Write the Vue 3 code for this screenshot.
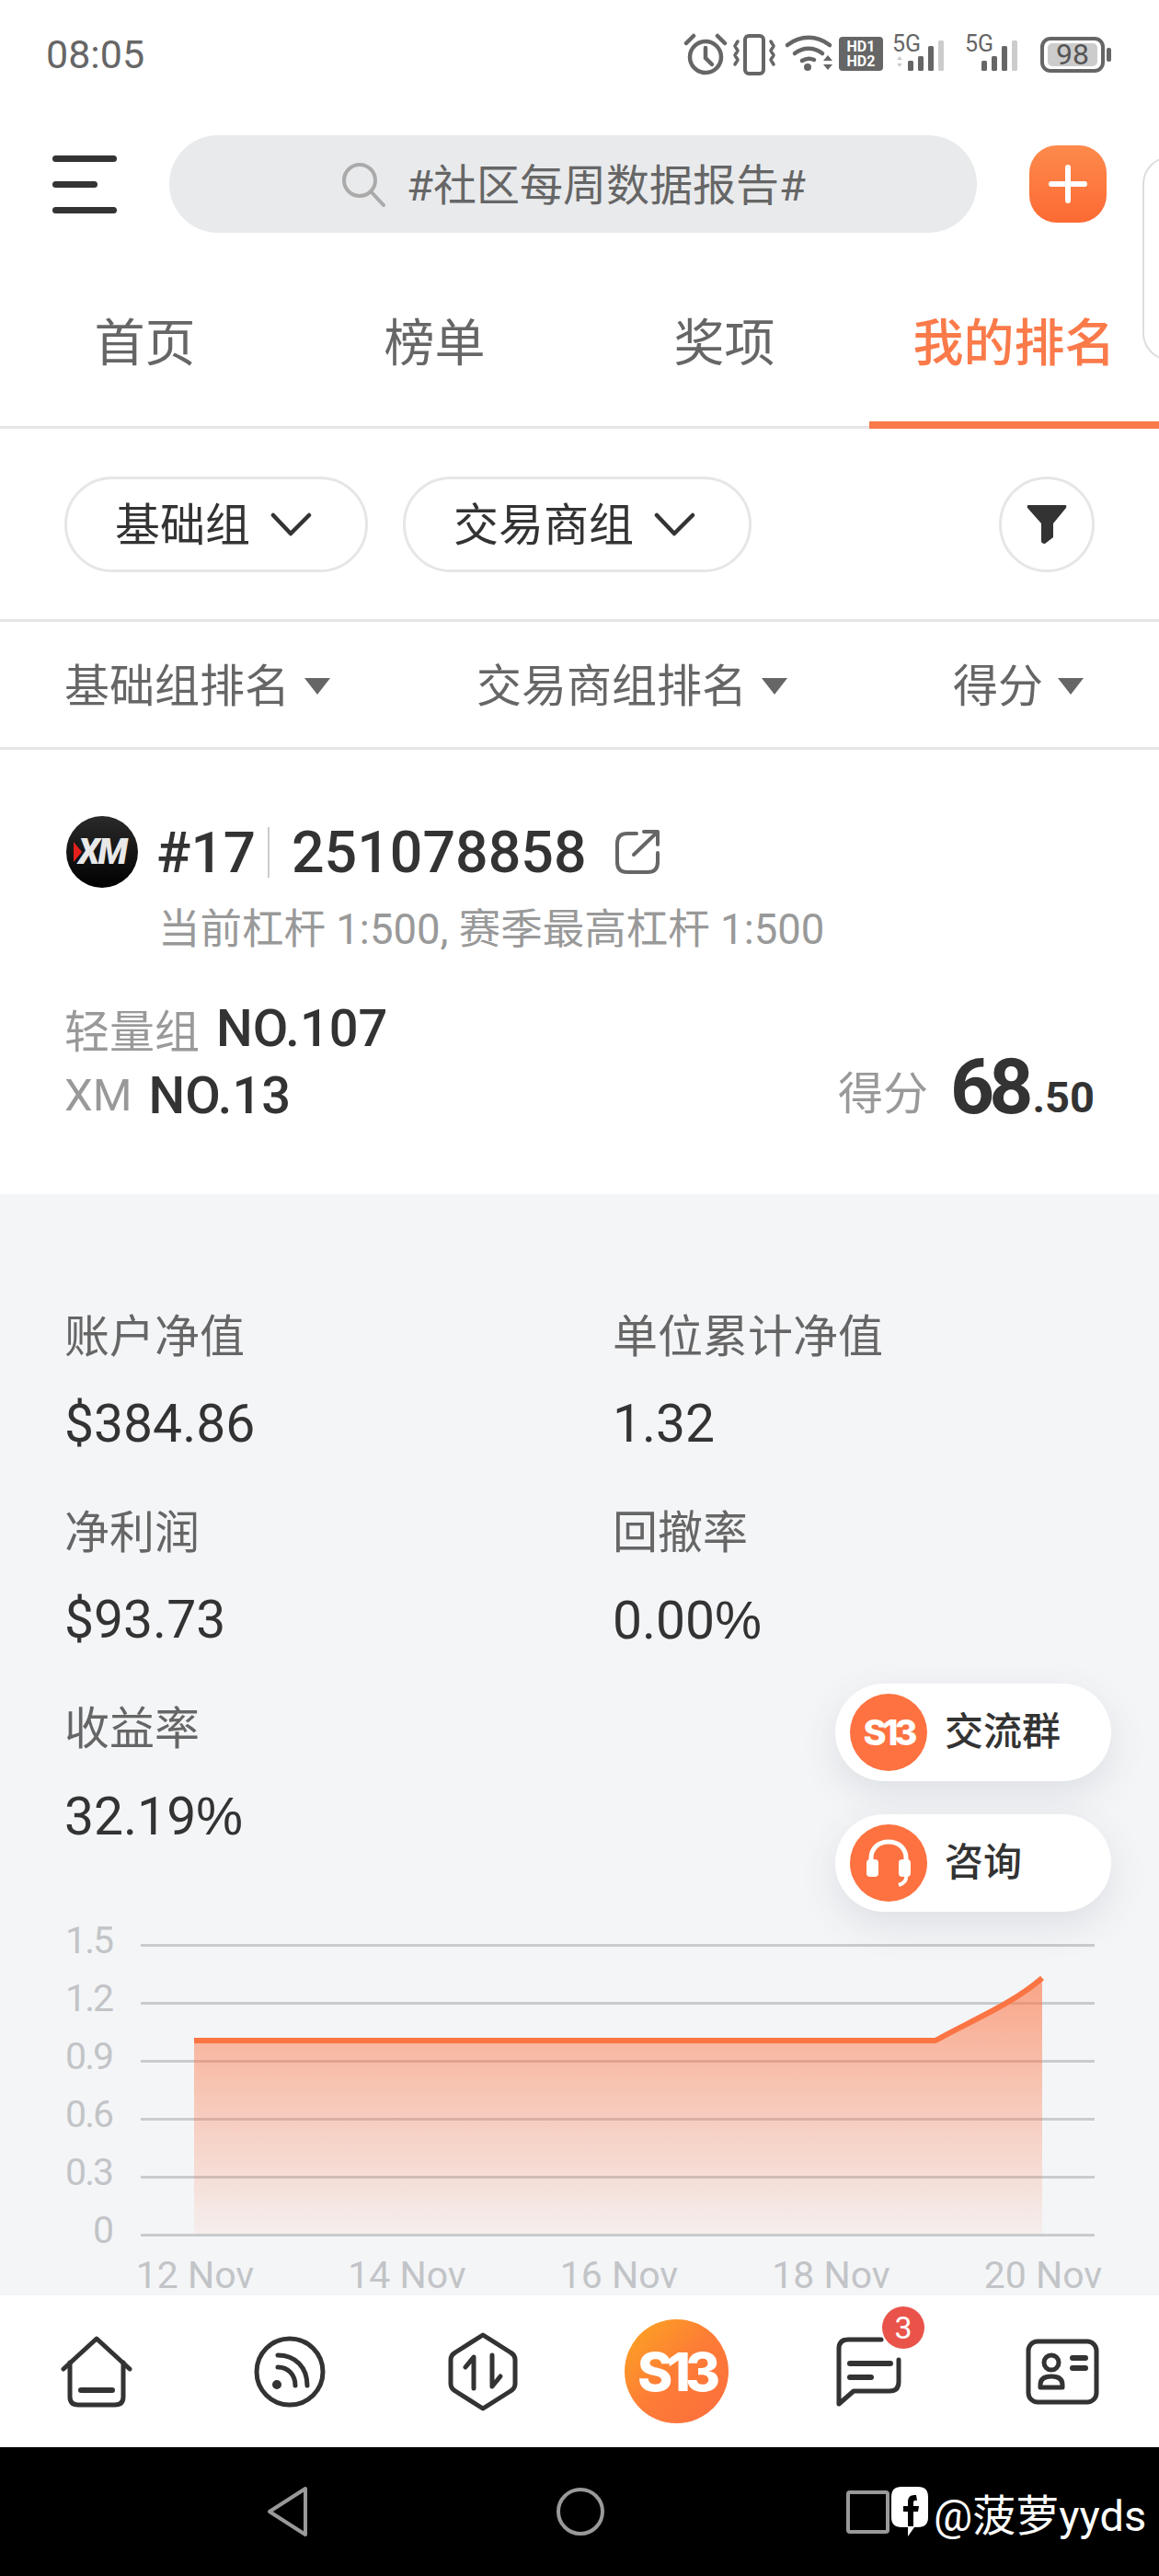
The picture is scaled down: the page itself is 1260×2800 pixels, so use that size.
<template>
  <div class="screen">
    <!-- Status bar -->
    <div class="status-bar">
      <span class="time">08:05</span>
      <svg class="status-icons" width="475" height="56" viewBox="0 -6 475 56">
        <!-- alarm -->
        <g fill="none" stroke="#666" stroke-width="4.5" stroke-linecap="round">
          <circle cx="28" cy="27" r="17" />
          <path d="M28 17v11l7 7" />
          <path d="M7 12l8-8M49 12l-8-8" />
        </g>
        <!-- vibrate -->
        <g fill="none" stroke="#666" stroke-width="3.5" stroke-linecap="round" stroke-linejoin="round">
          <rect x="71" y="4" width="20" height="41" rx="4" stroke-width="4" />
          <path d="M63 10l-3 5 3 5-3 5 3 5-3 5M99 10l3 5-3 5 3 5-3 5 3 5" />
        </g>
        <!-- wifi -->
        <g fill="none" stroke="#666" stroke-width="4.5" stroke-linecap="round">
          <path d="M117 14c14-11 32-11 46 0" />
          <path d="M125 23c9-7 21-7 30 0" />
          <path d="M133 31c5-3 9-3 13-1" />
        </g>
        <circle cx="139" cy="38" r="4" fill="#666" />
        <path d="M156 31l5-6 5 6zM156 35l5 6 5-6z" fill="#666" />
        <!-- dual HD -->
        <rect x="173" y="5" width="48" height="37" rx="4" fill="#666" />
        <text x="197" y="21" class="hd">HD1</text>
        <text x="197" y="37" class="hd">HD2</text>
        <!-- first sim -->
        <text x="231" y="21" class="sim">5G</text>
        <path d="M236 30l3-4 3 4zM236 34l3 4 3-4z" fill="#ccc" />
        <g fill="#666">
          <rect x="248" y="31" width="6" height="11" rx="1.5" />
          <rect x="259" y="26" width="6" height="16" rx="1.5" />
          <rect x="270" y="15" width="6" height="27" rx="1.5" />
        </g>
        <rect x="281" y="9" width="6" height="33" rx="1.5" fill="#ccc" />
        <!-- second sim -->
        <text x="310" y="21" class="sim">5G</text>
        <g fill="#666">
          <rect x="328" y="31" width="6" height="11" rx="1.5" />
          <rect x="339" y="26" width="6" height="16" rx="1.5" />
          <rect x="350" y="15" width="6" height="27" rx="1.5" />
        </g>
        <rect x="361" y="9" width="6" height="33" rx="1.5" fill="#ccc" />
        <!-- battery -->
        <rect x="394" y="7" width="66" height="35" rx="9" fill="none" stroke="#666" stroke-width="4" />
        <rect x="400" y="12" width="54" height="25" rx="5" fill="#ccc" />
        <text x="427" y="35" class="batt">98</text>
        <rect x="464" y="17" width="5" height="15" rx="2" fill="#666" />
      </svg>
    </div>

    <!-- Search header -->
    <div class="top-bar">
      <div class="menu-btn">
        <span></span>
        <span class="short"></span>
        <span></span>
      </div>
      <div class="search">
        <svg width="50" height="50" viewBox="0 0 50 50" fill="none" stroke="#aaa" stroke-width="4" stroke-linecap="round">
          <circle cx="21" cy="21" r="17" />
          <path d="M33 33l14 15" />
        </svg>
        <span>#社区每周数据报告#</span>
      </div>
      <div class="add-btn">
        <svg width="44" height="44" viewBox="0 0 44 44" stroke="#fff" stroke-width="6" stroke-linecap="round">
          <path d="M22 4v36M4 22h36" />
        </svg>
      </div>
    </div>
    <div class="peek"></div>

    <!-- Tabs -->
    <div class="tabs">
      <div v-for="tab in tabs" :key="tab" class="tab" :class="{ active: tab === activeTab }">{{ tab }}</div>
    </div>

    <!-- Group filters -->
    <div class="filters">
      <div v-for="item in filters" :key="item" class="pill">
        <span>{{ item }}</span>
        <svg width="45" height="26" viewBox="0 0 45 26" fill="none" stroke="#333" stroke-width="4.5" stroke-linecap="round" stroke-linejoin="round">
          <path d="M3 3l19 20L42 3" />
        </svg>
      </div>
      <div class="funnel">
        <svg width="44" height="42" viewBox="0 0 44 42" fill="#333">
          <path d="M2 0h40q2 0 1 3L29 20v15l-9 7q-4 0-4-3V20L1 3Q0 0 2 0z" />
        </svg>
      </div>
    </div>

    <!-- Sort headers -->
    <div class="sorts">
      <div v-for="item in sorts" :key="item" class="sort">
        <span>{{ item }}</span>
        <i class="caret"></i>
      </div>
    </div>

    <!-- Account card -->
    <div class="account">
      <div class="account-head">
        <div class="broker">
          <i class="chevron"></i>
          <span>XM</span>
        </div>
        <span class="seat">#17</span>
        <i class="divider"></i>
        <span class="account-no">251078858</span>
        <svg class="share" width="50" height="50" viewBox="0 0 50 50" fill="none" stroke="#666" stroke-width="4" stroke-linecap="round" stroke-linejoin="round">
          <path d="M24 5H14Q3 5 3 16v20q0 11 11 11h22q11 0 11-11V26" />
          <path d="M21 28L46 4M32 3h15v14" />
        </svg>
      </div>
      <div class="leverage">当前杠杆 1:500, 赛季最高杠杆 1:500</div>
      <div class="rank-row">
        <div class="ranks">
          <div class="rank"><span class="rank-label">轻量组</span><b>NO.107</b></div>
          <div class="rank"><span class="rank-label">XM</span><b>NO.13</b></div>
        </div>
        <div class="score">
          <span class="rank-label">得分</span>
          <b class="score-int">68</b>
          <b class="score-dec">.50</b>
        </div>
      </div>
    </div>

    <!-- Stats and chart -->
    <div class="stats">
      <div class="metrics">
        <div v-for="m in metrics" :key="m.label" class="metric">
          <div class="metric-label">{{ m.label }}</div>
          <div class="metric-value">{{ m.value }}<span v-if="m.percent" class="percent">%</span></div>
        </div>
      </div>

      <svg class="chart" width="1260" height="415" viewBox="0 0 1260 415">
        <defs>
          <linearGradient id="areaFill" x1="0" y1="0" x2="0" y2="1">
            <stop offset="0" stop-color="#fd7342" stop-opacity="0.62" />
            <stop offset="1" stop-color="#fd7342" stop-opacity="0.05" />
          </linearGradient>
        </defs>
        <g v-for="(tick, i) in yTicks" :key="tick">
          <line x1="153" x2="1190" :y1="tickY(i)" :y2="tickY(i)" stroke="#c9cbce" stroke-width="3" />
          <text x="122" :y="tickY(i) + 8" class="axis y-axis" text-anchor="end">{{ tick }}</text>
        </g>
        <path d="M211 139H1017C1050 120 1100 100 1133 71V350H211Z" fill="url(#areaFill)" />
        <path d="M211 139H1017C1050 120 1100 100 1133 71" fill="none" stroke="#fb7443" stroke-width="6" />
        <text v-for="(label, i) in xLabels" :key="label" :x="212 + i * 230.5" y="408" class="axis" text-anchor="middle">{{ label }}</text>
      </svg>
    </div>

    <!-- Floating shortcuts -->
    <div class="float-btn group-btn">
      <div class="float-icon"><span>S13</span></div>
      <span class="float-text">交流群</span>
    </div>
    <div class="float-btn help-btn">
      <div class="float-icon">
        <svg width="50" height="52" viewBox="0 0 50 52">
          <path d="M6 26V21C6 10 14 3 25 3s19 7 19 18v5" fill="none" stroke="#fff" stroke-width="5" />
          <rect x="1" y="22" width="13" height="19" rx="4" fill="#fff" />
          <rect x="36" y="22" width="13" height="19" rx="4" fill="#fff" />
          <path d="M44 40q1 7-8 10" fill="none" stroke="#fff" stroke-width="4" />
        </svg>
      </div>
      <span class="float-text">咨询</span>
    </div>

    <!-- Bottom navigation -->
    <div class="nav">
      <div class="nav-item">
        <svg width="80" height="78" viewBox="0 0 80 78" class="line-icon">
          <path d="M4 36L40 3l36 33" />
          <path d="M11 29v37q0 9 9 9h40q9 0 9-9V29" />
          <path d="M23 59h34" stroke-width="6" />
        </svg>
      </div>
      <div class="nav-item">
        <svg width="80" height="80" viewBox="0 0 80 80" class="line-icon">
          <circle cx="40" cy="40" r="36" />
          <path d="M27 35c11 0 19 8 19 20" />
          <path d="M27 22c19 0 32 13 32 33" />
          <circle cx="26" cy="54" r="4" fill="#333" stroke-width="2" />
        </svg>
      </div>
      <div class="nav-item">
        <svg width="76" height="86" viewBox="0 0 76 86" class="line-icon">
          <path d="M38 3l30 19q5 3 5 8v26q0 5-5 8L38 83 8 64q-5-3-5-8V30q0-5 5-8z" />
          <path d="M28 61V27L19 38" />
          <path d="M48 25v34l9-11" />
        </svg>
      </div>
      <div class="nav-item">
        <div class="brand"><span>S13</span></div>
      </div>
      <div class="nav-item">
        <svg width="74" height="78" viewBox="0 0 74 78" class="line-icon">
          <path d="M50 4H14Q4 4 4 14v60l16-14h39q10 0 10-10V26" />
          <path d="M16 30h44" stroke-width="6" />
          <path d="M16 45h23" stroke-width="6" />
        </svg>
        <span class="badge">3</span>
      </div>
      <div class="nav-item">
        <svg width="80" height="72" viewBox="0 0 80 72" class="line-icon">
          <rect x="3" y="3" width="74" height="66" rx="10" />
          <circle cx="28" cy="26" r="8" />
          <path d="M16 53v-3q0-9 12-9t12 9v3z" />
          <path d="M51 21h14M51 32h14" stroke-width="6" />
        </svg>
      </div>
    </div>

    <!-- System navigation -->
    <div class="sys-nav">
      <svg width="48" height="58" viewBox="0 0 48 58" fill="none" stroke="#999" stroke-width="4" stroke-linejoin="round">
        <path d="M44 4v50L5 29z" />
      </svg>
      <i class="sys-home"></i>
      <i class="sys-recent"></i>
      <div class="mark">
        <svg width="42" height="56" viewBox="0 0 42 56">
          <path d="M12 1h18q11 0 11 11v22q0 11-11 11h-4l-7 10v-10h-7Q1 45 1 34V12Q1 1 12 1z" fill="#fff" />
          <path d="M28 10q-9-1-9 7v5h-5v6h5v16h6V28h5l1-6h-6v-4q0-3 4-2z" fill="#000" />
        </svg>
        <span>@菠萝yyds</span>
      </div>
    </div>
  </div>
</template>

<script setup>
const activeTab = '我的排名'
const tabs = ['首页', '榜单', '奖项', '我的排名']
const filters = ['基础组', '交易商组']
const sorts = ['基础组排名', '交易商组排名', '得分']

const metrics = [
  { label: '账户净值', value: '$384.86' },
  { label: '单位累计净值', value: '1.32' },
  { label: '净利润', value: '$93.73' },
  { label: '回撤率', value: '0.00', percent: true },
  { label: '收益率', value: '32.19', percent: true }
]

const yTicks = ['1.5', '1.2', '0.9', '0.6', '0.3', '0']
const xLabels = ['12 Nov', '14 Nov', '16 Nov', '18 Nov', '20 Nov']

// grid lines run from 1.5 at the top to 0 at the baseline
function tickY(i) {
  return 35.5 + i * 63
}
</script>

<style>
body {
  background: #fff;
}
</style>

<style scoped>
.screen {
  position: relative;
  width: 1260px;
  height: 2800px;
  overflow: hidden;
  display: flex;
  flex-direction: column;
  background: #fff;
  font-family: Roboto, "Noto Sans CJK SC", sans-serif;
  color: #333;
}

/* Status bar */
.status-bar {
  height: 122px;
  flex-shrink: 0;
  display: flex;
  justify-content: space-between;
  padding: 35px 46px 0 50px;
  box-sizing: border-box;
}

.time {
  font-size: 43px;
  line-height: 48px;
  color: #666;
}

.status-icons {
  margin-top: -6px;
}

.hd {
  font: 700 16px Roboto, sans-serif;
  fill: #fff;
  text-anchor: middle;
}

.sim {
  font: 400 25px Roboto, sans-serif;
  fill: #666;
}

.batt {
  font: 400 32px Roboto, sans-serif;
  fill: #555;
  text-anchor: middle;
}

/* Search header */
.top-bar {
  height: 156px;
  flex-shrink: 0;
  display: flex;
  align-items: center;
  padding-left: 57px;
}

.menu-btn {
  width: 70px;
  display: flex;
  flex-direction: column;
  gap: 21px;
}

.menu-btn span {
  display: block;
  height: 7px;
  border-radius: 4px;
  background: #333;
}

.menu-btn .short {
  width: 49px;
}

.search {
  width: 878px;
  height: 106px;
  margin-left: 57px;
  display: flex;
  align-items: center;
  justify-content: center;
  gap: 22px;
  border-radius: 53px;
  background: #e9eaec;
  font-size: 47px;
  color: #666;
}

.search span {
  margin-bottom: 6px;
}

.add-btn {
  width: 84px;
  height: 84px;
  margin-left: 57px;
  display: flex;
  align-items: center;
  justify-content: center;
  border-radius: 30px;
  background: linear-gradient(180deg, #fd8a4c, #fd6a34);
}

.peek {
  position: absolute;
  left: 1242px;
  top: 170px;
  width: 60px;
  height: 222px;
  box-sizing: border-box;
  border: 2px solid #ddd;
  border-radius: 30px;
}

/* Tabs */
.tabs {
  height: 188px;
  flex-shrink: 0;
  display: flex;
  box-sizing: border-box;
  border-bottom: 3px solid #e6e6e6;
}

.tab {
  position: relative;
  flex: 1;
  display: flex;
  align-items: center;
  justify-content: center;
  padding-bottom: 6px;
  font-size: 55px;
  color: #666;
}

.tab.active {
  color: #fa7a4a;
  font-weight: 500;
}

.tab.active::after {
  content: "";
  position: absolute;
  left: 0;
  right: 0;
  bottom: -3px;
  height: 8px;
  background: #fa7a4a;
}

/* Filters */
.filters {
  height: 210px;
  flex-shrink: 0;
  box-sizing: border-box;
  display: flex;
  align-items: center;
  gap: 38px;
  padding: 0 70px 0 70px;
  border-bottom: 3px solid #e6e6e6;
}

.pill {
  height: 104px;
  box-sizing: border-box;
  display: flex;
  align-items: center;
  gap: 22px;
  padding: 0 58px 0 52px;
  border: 3px solid #e6e6e6;
  border-radius: 52px;
  font-size: 49px;
}

.pill span {
  margin-bottom: 6px;
}

.funnel {
  width: 104px;
  height: 104px;
  margin-left: auto;
  box-sizing: border-box;
  display: flex;
  align-items: center;
  justify-content: center;
  border: 3px solid #e6e6e6;
  border-radius: 50%;
}

/* Sort row */
.sorts {
  height: 139px;
  flex-shrink: 0;
  box-sizing: border-box;
  display: grid;
  grid-template-columns: 448px 518px auto;
  align-items: center;
  padding-left: 70px;
  border-bottom: 3px solid #e6e6e6;
  font-size: 49px;
  color: #666;
}

.sort {
  display: flex;
  align-items: center;
  gap: 16px;
}

.sort span {
  margin-bottom: 6px;
}

.caret {
  width: 0;
  height: 0;
  border-left: 14px solid transparent;
  border-right: 14px solid transparent;
  border-top: 18px solid #666;
  margin-top: 4px;
}

/* Account card */
.account {
  height: 483px;
  flex-shrink: 0;
  box-sizing: border-box;
  padding: 71px 70px 0 72px;
}

.account-head {
  display: flex;
  align-items: center;
  height: 80px;
}

.broker {
  position: relative;
  width: 78px;
  height: 78px;
  display: flex;
  align-items: center;
  justify-content: center;
  border-radius: 50%;
  background: linear-gradient(180deg, #2a2a2a, #000);
  color: #e8e8e8;
  font-size: 38px;
  font-weight: 900;
  font-style: italic;
  letter-spacing: -2px;
}

.chevron {
  position: absolute;
  left: 8px;
  top: 28px;
  border-left: 9px solid #e4201c;
  border-top: 11px solid transparent;
  border-bottom: 11px solid transparent;
}

.seat {
  margin-left: 20px;
  font-size: 62px;
  font-weight: 500;
}

.divider {
  width: 2px;
  height: 55px;
  margin: 0 24px 0 13px;
  background: #ccc;
}

.account-no {
  font-size: 62.7px;
  font-weight: 500;
}

.share {
  margin-left: 30px;
}

.leverage {
  margin: 15px 0 0 100px;
  font-size: 45.5px;
  line-height: 60px;
  color: #999;
}

.rank-row {
  display: flex;
  justify-content: space-between;
  align-items: flex-end;
  margin-top: 40px;
}

.ranks {
  margin-left: -2px;
}

.rank {
  display: flex;
  align-items: center;
  gap: 18px;
  height: 73px;
}

.rank b {
  font-size: 56px;
  font-weight: 500;
}

.rank-label {
  font-size: 49px;
  color: #999;
}

.score {
  display: flex;
  align-items: flex-end;
  height: 84px;
  margin-bottom: 3px;
}

.score .rank-label {
  line-height: 60px;
  margin-right: 24px;
  margin-bottom: 4px;
}

.score-int {
  height: 84px;
  line-height: 84px;
  font-size: 84px;
  font-weight: 700;
  letter-spacing: -6px;
}

.score-dec {
  line-height: 60px;
  margin: 0 0 1px 5px;
  font-size: 47px;
  font-weight: 700;
}

/* Stats */
.stats {
  height: 1197px;
  flex-shrink: 0;
  box-sizing: border-box;
  padding-top: 126px;
  background: #f4f5f7;
}

.metrics {
  display: grid;
  grid-template-columns: 596px 1fr;
  row-gap: 59px;
  padding-left: 70px;
}

.metric-label {
  height: 60px;
  line-height: 60px;
  font-size: 49px;
  color: #666;
}

.metric-value {
  height: 60px;
  margin-top: 34px;
  line-height: 60px;
  font-size: 57px;
  color: #333;
}

.percent {
  font-family: "Liberation Sans", sans-serif;
}

.chart {
  display: block;
  margin-top: 75px;
  overflow: visible;
}

.axis {
  font: 400 41px Roboto, sans-serif;
  fill: #c2c4c7;
}

.y-axis {
  letter-spacing: -2px;
}

/* Floating shortcuts */
.float-btn {
  position: absolute;
  left: 908px;
  width: 300px;
  height: 106px;
  box-sizing: border-box;
  display: flex;
  align-items: center;
  gap: 19px;
  padding-left: 16px;
  border-radius: 53px;
  background: #fff;
  box-shadow: 0 14px 40px rgba(60, 70, 90, 0.12);
  font-size: 42px;
  font-weight: 500;
}

.group-btn {
  top: 1830px;
}

.help-btn {
  top: 1972px;
}

.float-text {
  margin-bottom: 10px;
}

.float-icon {
  width: 84px;
  height: 84px;
  display: flex;
  align-items: center;
  justify-content: center;
  border-radius: 50%;
  background: #fd7240;
  color: #fff;
  font-size: 38px;
  font-weight: 800;
  font-family: Inter, sans-serif;
  letter-spacing: -4px;
}

/* Bottom navigation */
.nav {
  height: 165px;
  flex-shrink: 0;
  display: grid;
  grid-template-columns: repeat(6, 210px);
  background: #fff;
}

.nav-item {
  position: relative;
  display: flex;
  align-items: center;
  justify-content: center;
}

.line-icon {
  fill: none;
  stroke: #333;
  stroke-width: 5;
  stroke-linecap: round;
  stroke-linejoin: round;
}

.brand {
  width: 113px;
  height: 113px;
  display: flex;
  align-items: center;
  justify-content: center;
  border-radius: 50%;
  background: linear-gradient(135deg, #fca720 0%, #fd7c36 50%, #fb6d3e 100%);
  color: #fff;
  font-family: Inter, sans-serif;
  font-size: 58px;
  font-weight: 800;
  letter-spacing: -6px;
}

.badge {
  position: absolute;
  left: 119px;
  top: 12px;
  width: 46px;
  height: 46px;
  display: flex;
  align-items: center;
  justify-content: center;
  border-radius: 50%;
  background: #e9534a;
  color: #fff;
  font-size: 34px;
}

/* System navigation */
.sys-nav {
  position: relative;
  flex: 1;
  display: flex;
  align-items: center;
  padding-left: 288px;
  background: #000;
}

.sys-home {
  width: 52px;
  height: 52px;
  margin-left: 269px;
  box-sizing: border-box;
  border: 4px solid #999;
  border-radius: 50%;
}

.sys-recent {
  width: 47px;
  height: 47px;
  margin-left: 263px;
  box-sizing: border-box;
  border: 4px solid #999;
  border-radius: 4px;
}

.mark {
  display: flex;
  align-items: center;
  gap: 5px;
  margin-left: 1px;
  color: #fff;
  font-size: 47px;
  white-space: nowrap;
}
</style>
